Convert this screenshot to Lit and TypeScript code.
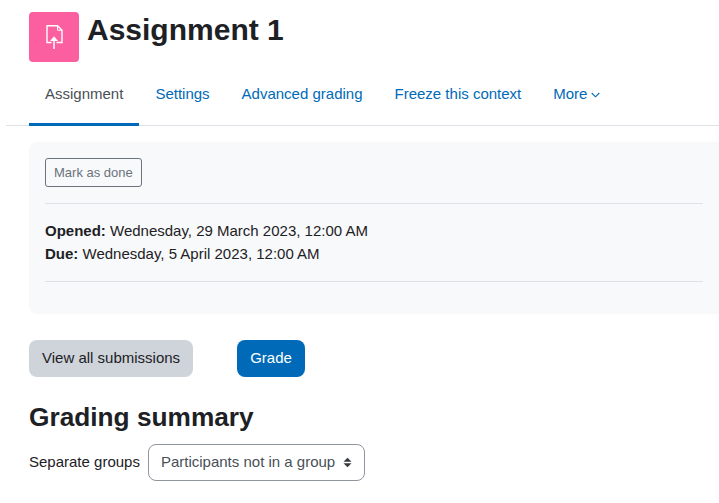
import { LitElement, html, css } from 'lit';
import { customElement } from 'lit/decorators.js';

@customElement('app-root')
export class AppRoot extends LitElement {
  static styles = css`
    :host {
      display: block;
      height: 503px;
      overflow: hidden;
      background: #fff;
      color: #1d2125;
      font-family: "Liberation Sans", Arial, sans-serif;
      font-size: 15px;
      line-height: 22.5px;
    }

    .header {
      display: flex;
      align-items: flex-start;
      gap: 8px;
      padding: 12px 0 0 29px;
    }

    .icon {
      flex: none;
      width: 50px;
      height: 50px;
      border-radius: 4px;
      background: #fb5fa0;
      display: flex;
      align-items: center;
      justify-content: center;
    }

    h1 {
      margin: 0;
      font-size: 30px;
      line-height: 36px;
      font-weight: 700;
    }

    .tabs {
      display: flex;
      margin: 0 0 16px 6px;
      padding-left: 23px;
      height: 63px;
      border-bottom: 1px solid #dee2e6;
    }

    .tab {
      display: flex;
      align-items: center;
      gap: 4px;
      padding: 4px 16px 0;
      color: #006ab8;
      margin-bottom: -1px;
      border-bottom: 3px solid transparent;
    }

    .tab.active {
      color: #495057;
      border-bottom-color: #006ab8;
    }

    .card {
      margin-left: 29px;
      height: 172px;
      box-sizing: border-box;
      padding: 16px;
      background: #f8f9fa;
      border-radius: 8px 0 0 8px;
    }

    .mark {
      display: inline-block;
      box-sizing: border-box;
      height: 29px;
      padding: 0 8px;
      border: 1px solid #6a737b;
      border-radius: 3px;
      font-size: 13px;
      line-height: 27px;
      color: #6a737b;
    }

    .dates {
      margin-top: 16px;
      padding: 16px 0 15px;
      box-sizing: content-box;
      border-top: 1px solid #dee2e6;
      border-bottom: 1px solid #dee2e6;
      height: 46px;
    }

    .dates div {
      height: 23px;
    }

    .actions {
      display: flex;
      gap: 44px;
      margin: 26px 0 0 29px;
    }

    .btn {
      box-sizing: border-box;
      height: 37px;
      padding: 0 13px;
      border-radius: 8px;
      line-height: 36px;
      background: #ced4da;
      color: #1d2125;
    }

    .btn.primary {
      background: #006ab8;
      color: #fff;
    }

    h2 {
      margin: 22px 0 0 29px;
      font-size: 26.25px;
      line-height: 36px;
      font-weight: 700;
    }

    .filter {
      display: flex;
      align-items: center;
      gap: 8px;
      margin: 9px 0 0 29px;
    }

    .select {
      box-sizing: border-box;
      display: flex;
      align-items: center;
      justify-content: space-between;
      width: 217px;
      height: 37px;
      padding: 0 12px;
      border: 1px solid #8f959e;
      border-radius: 8px;
      color: #495057;
    }
  `;

  render() {
    return html`
      <div class="header">
        <div class="icon">
          <svg width="24" height="30" viewBox="0 0 24 30" fill="none" stroke="#fff" stroke-width="1.4">
            <path d="M9.5 20.5H5V3.7h10.5L20 8.2v12.3h-5.5" />
            <path d="M15.5 3.7v4.5H20" stroke-width="1" />
            <path d="M12 27V17" stroke-width="1.5" />
            <path d="M8 19 12 14.3l4 4.7z" fill="#fff" stroke="none" />
          </svg>
        </div>
        <h1>Assignment 1</h1>
      </div>
      <nav class="tabs">
        <div class="tab active">Assignment</div>
        <div class="tab">Settings</div>
        <div class="tab">Advanced grading</div>
        <div class="tab">Freeze this context</div>
        <div class="tab">
          More
          <svg width="9" height="6" viewBox="0 0 9 6" fill="none" stroke="#006ab8" stroke-width="1.1">
            <path d="M.7 1l3.8 3.8L8.3 1" />
          </svg>
        </div>
      </nav>
      <section class="card">
        <div class="mark">Mark as done</div>
        <div class="dates">
          <div><strong>Opened:</strong> Wednesday, 29 March 2023, 12:00 AM</div>
          <div><strong>Due:</strong> Wednesday, 5 April 2023, 12:00 AM</div>
        </div>
      </section>
      <div class="actions">
        <div class="btn">View all submissions</div>
        <div class="btn primary">Grade</div>
      </div>
      <h2>Grading summary</h2>
      <div class="filter">
        <span>Separate groups</span>
        <div class="select">
          <span>Participants not in a group</span>
          <svg width="9" height="11" viewBox="0 0 9 11" fill="#343a40">
            <path d="M4.5.8 8.5 4.8H.5zM4.5 10.2.5 6.2h8z" />
          </svg>
        </div>
      </div>
    `;
  }
}
